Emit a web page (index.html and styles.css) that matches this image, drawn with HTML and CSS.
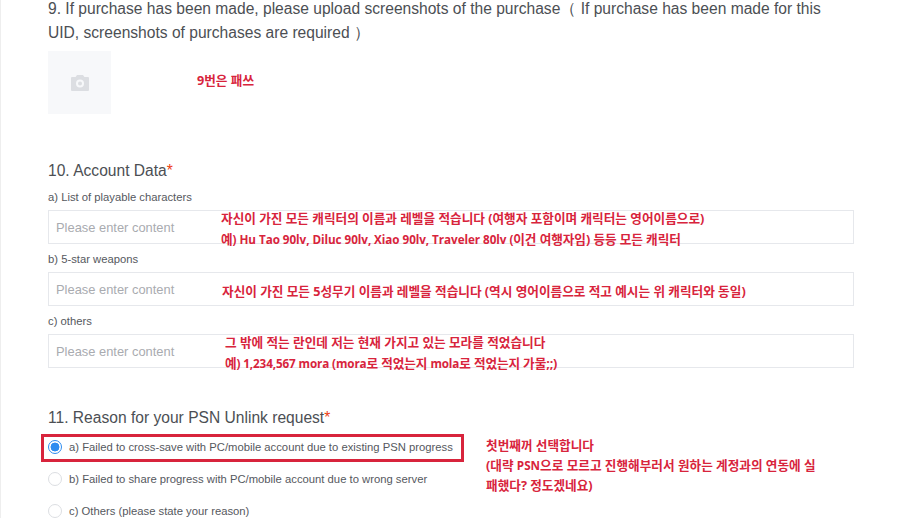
FILE: index.html
```html
<!DOCTYPE html>
<html lang="en">
<head>
<meta charset="utf-8">
<title>PSN Unlink request</title>
<link rel="stylesheet" href="styles.css">
</head>
<body>
<main class="page">
  <section class="q q9">
    <h2 class="title">9. If purchase has been made, please upload screenshots of the purchase（ If purchase has been made for this<br>UID, screenshots of purchases are required ）</h2>
    <div class="upload">
      <svg class="camera" viewBox="0 0 18 16" width="18" height="16"><path fill="#dcdee2" fill-rule="evenodd" d="M6 0h6l1.4 2H17a1 1 0 0 1 1 1v12a1 1 0 0 1-1 1H1a1 1 0 0 1-1-1V3a1 1 0 0 1 1-1h3.600zM9 4.500a4 4 0 1 0 0 8 4 4 0 0 0 0-8zM9 6.500a2 2 0 1 1 0 4 2 2 0 0 1 0-4z"/></svg>
    </div>
  </section>
  <section class="q q10">
    <h2 class="title">10. Account Data<span class="req">*</span></h2>
    <div class="label first">a) List of playable characters</div>
    <div class="input">Please enter content</div>
    <div class="label">b) 5-star weapons</div>
    <div class="input">Please enter content</div>
    <div class="label">c) others</div>
    <div class="input">Please enter content</div>
  </section>
  <section class="q q11">
    <h2 class="title">11. Reason for your PSN Unlink request<span class="req">*</span></h2>
    <div class="options">
      <div class="option"><span class="radio on"></span>a) Failed to cross-save with PC/mobile account due to existing PSN progress</div>
      <div class="option"><span class="radio"></span>b) Failed to share progress with PC/mobile account due to wrong server</div>
      <div class="option"><span class="radio"></span>c) Others (please state your reason)</div>
    </div>
  </section>
</main>
<div class="note n1">9번은 패쓰</div>
<div class="note n2">자신이 가진 모든 캐릭터의 이름과 레벨을 적습니다 (여행자 포함이며 캐릭터는 영어이름으로)</div>
<div class="note n3">예<span class="lat">) Hu Tao 90lv, Diluc 90lv, Xiao 90lv, Traveler 80lv (</span>이건 여행자임) 등등 모든 캐릭터</div>
<div class="note n4">자신이 가진 모든 5성무기 이름과 레벨을 적습니다 (역시 영어이름으로 적고 예시는 위 캐릭터와 동일)</div>
<div class="note n5">그 밖에 적는 란인데 저는 현재 가지고 있는 모라를 적었습니다</div>
<div class="note n6">예<span class="lat">) 1,234,567 mora (mora</span>로 적었는지 <span class="lat">mola</span>로 적었는지 가물;;)</div>
<div class="note n7">첫번째꺼 선택합니다</div>
<div class="note n8">(대략 <span class="lat">PSN</span>으로 모르고 진행해부러서 원하는 계정과의 연동에 실</div>
<div class="note n9">패했다? 정도겠네요)</div>
<div class="redbox"></div>
</body>
</html>
```
FILE: styles.css
```css
html, body {
  margin: 0;
  padding: 0;
  width: 900px;
  height: 518px;
  overflow: hidden;
  background: #fff;
  font-family: "Liberation Sans", Arial, sans-serif;
  color: #4c4f54;
}
body { position: relative; }
.page {
  box-sizing: border-box;
  height: 518px;
  padding: 0 46px 0 47px;
  border-left: 1px solid #eeeeee;
  overflow: hidden;
}
.title {
  margin: 0;
  font-size: 15.6px;
  font-weight: 400;
  line-height: 24px;
  color: #4c4f54;
}
.q9 { margin-top: -3px; }
.upload {
  width: 63px;
  height: 63px;
  margin-top: 6px;
  background: #f7f8fa;
  display: flex;
  align-items: center;
  justify-content: center;
}
.q10 { margin-top: 45px; }
.req { color: #ed4014; }
.label {
  font-size: 11.25px;
  line-height: 16px;
  margin-top: 7px;
  color: #55585e;
}
.label.first { margin-top: 6px; }
.input {
  box-sizing: border-box;
  height: 34px;
  margin-top: 5px;
  padding: 0 7px;
  border: 1px solid #e6e8ec;
  font-size: 12.9px;
  line-height: 34px;
  color: #a9abb0;
}
.q11 { margin-top: 38px; }
.options { margin-top: 1px; }
.option {
  display: flex;
  align-items: center;
  height: 32px;
  font-size: 11.27px;
  color: #55585e;
}
.radio {
  box-sizing: border-box;
  width: 14px;
  height: 14px;
  margin-right: 7px;
  border: 1px solid #dcdee2;
  border-radius: 50%;
  background: #fff;
  flex: none;
}
.radio.on {
  border: 1.500px solid #2d8cf0;
  background: radial-gradient(circle, #2d8cf0 0 4.200px, #fff 4.700px);
}
.note {
  position: absolute;
  white-space: nowrap;
  font-family: "Open Sans", "Noto Sans CJK KR", sans-serif;
  font-weight: 700;
  font-size: 12.65px;
  line-height: 16px;
  color: #d8243c;
}
.lat { font-size: 11.7px; }
.n1 { left: 197px; top: 72px; }
.n2 { left: 221px; top: 210px; }
.n3 { left: 221px; top: 231px; letter-spacing: -0.06px; }
.n4 { left: 222px; top: 283px; }
.n5 { left: 225px; top: 334px; }
.n6 { left: 225px; top: 355px; letter-spacing: -0.12px; }
.n7 { left: 486px; top: 437px; }
.n8 { left: 486px; top: 457px; }
.n9 { left: 486px; top: 477px; }
.redbox {
  position: absolute;
  left: 41px;
  top: 434px;
  width: 423px;
  height: 28px;
  box-sizing: border-box;
  border: 3px solid #d8243c;
}
```
